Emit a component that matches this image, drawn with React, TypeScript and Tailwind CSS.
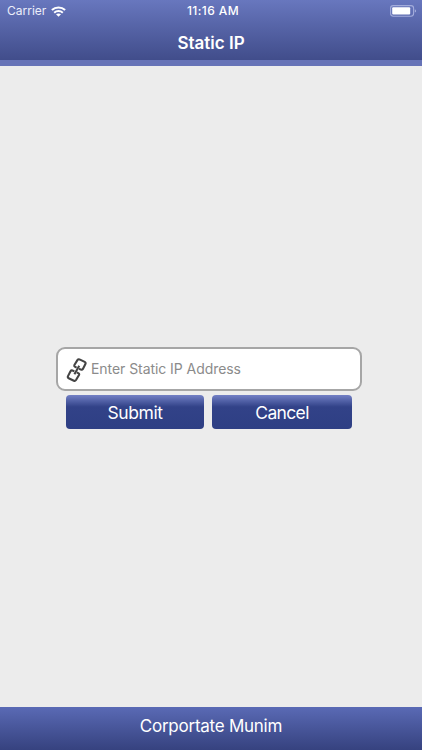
import React from 'react';

const WifiIcon: React.FC = () => (
  <svg width="15" height="11" viewBox="0 0 15 11" fill="none" stroke="#ffffff">
    <path d="M0.9 4.1C4.6 0.6 10.4 0.6 14.1 4.1" strokeWidth="2.1" />
    <path d="M3.2 6.7C5.6 4.5 9.4 4.5 11.8 6.7" strokeWidth="2" />
    <path d="M7.5 10.7L5 8.3C6.4 7.1 8.6 7.1 10 8.3Z" fill="#ffffff" stroke="none" />
  </svg>
);

const BatteryIcon: React.FC = () => (
  <svg width="27" height="12" viewBox="0 0 27 12" fill="none">
    <rect x="0.6" y="0.6" width="23" height="10.6" rx="2.6" stroke="#a3acdb" strokeWidth="1.1" />
    <rect x="2.2" y="2.2" width="18" height="7.4" rx="1" fill="#ffffff" />
    <path d="M24.8 4.2C26.6 4.8 26.6 7 24.8 7.6Z" fill="#a3acdb" />
  </svg>
);

const ChainIcon: React.FC = () => (
  <svg width="22" height="28" viewBox="0 0 22 28" fill="none" stroke="#444444" strokeWidth="2.1" strokeLinejoin="round">
    <path d="M10.6 12.6L8.8 11.6Q7.9 11 8.4 10L11.4 5.1Q12.2 3.9 13.5 4.4L18.7 6.9Q20.1 7.6 19.4 9L16.9 13.9Q16.2 15.1 14.9 14.6L13 13.7" />
    <path d="M10.8 17.4L12.6 18.4Q13.5 19 13 20L10 25Q9.2 26.2 7.9 25.7L2.7 23.2Q1.3 22.5 2 21.1L4.5 16.2Q5.2 15 6.5 15.5L8.4 16.4" />
    <path d="M13.2 10.8L8.4 19.2" />
  </svg>
);

interface ActionButtonProps {
  label: string;
  className: string;
}

const ActionButton: React.FC<ActionButtonProps> = ({ label, className }) => (
  <button
    type="button"
    className={`h-[34px] rounded-[4px] bg-linear-to-b from-[#7380c5] via-[#324288] via-35% to-[#2e3f84] pt-[2px] text-[17.5px] leading-none text-white ${className}`}
  >
    {label}
  </button>
);

const App: React.FC = () => {
  return (
    <div className="flex h-[750px] w-[422px] flex-col overflow-hidden bg-[#ececec] font-['Inter',sans-serif]">
      {/* Status bar + title */}
      <header className="h-[66px] shrink-0 border-b-[6px] border-[#6673b7] bg-linear-to-b from-[#6877be] to-[#414d8b] bg-origin-padding text-white">
        <div className="grid h-[22px] grid-cols-3 items-center pl-[7px] pr-[5px] text-[12px]">
          <div className="flex items-center gap-[5px]">
            <span className="text-[#eceefa]">Carrier</span>
            <WifiIcon />
          </div>
          <span className="pl-[2px] text-center font-medium tracking-[0.4px]">11:16 AM</span>
          <div className="flex justify-end">
            <BatteryIcon />
          </div>
        </div>
        <h1 className="flex h-[42px] items-center justify-center pt-[2px] text-[17px] font-semibold">Static IP</h1>
      </header>

      {/* IP form */}
      <main className="flex-1 pl-[56px] pt-[281px]">
        <div className="flex h-[44px] w-[306px] items-center rounded-[9px] border-2 border-[#a6a6a6] bg-white pl-[8px]">
          <ChainIcon />
          <input
            type="text"
            placeholder="Enter Static IP Address"
            className="ml-[3px] w-[240px] pb-[1px] text-[14px] tracking-[-0.06px] outline-none placeholder:text-[#8b8b8b]"
          />
        </div>
        <div className="mt-[4px] flex gap-[8px] pl-[10px]">
          <ActionButton label="Submit" className="w-[138px] tracking-[-0.4px]" />
          <ActionButton label="Cancel" className="w-[140px] tracking-[-0.65px]" />
        </div>
      </main>

      <footer className="flex h-[43px] shrink-0 items-center justify-center bg-linear-to-b from-[#5a6ab5] to-[#36427f] pb-[4px] text-[17px] tracking-[-0.25px] text-white">
        Corportate Munim
      </footer>
    </div>
  );
};

export default App;
